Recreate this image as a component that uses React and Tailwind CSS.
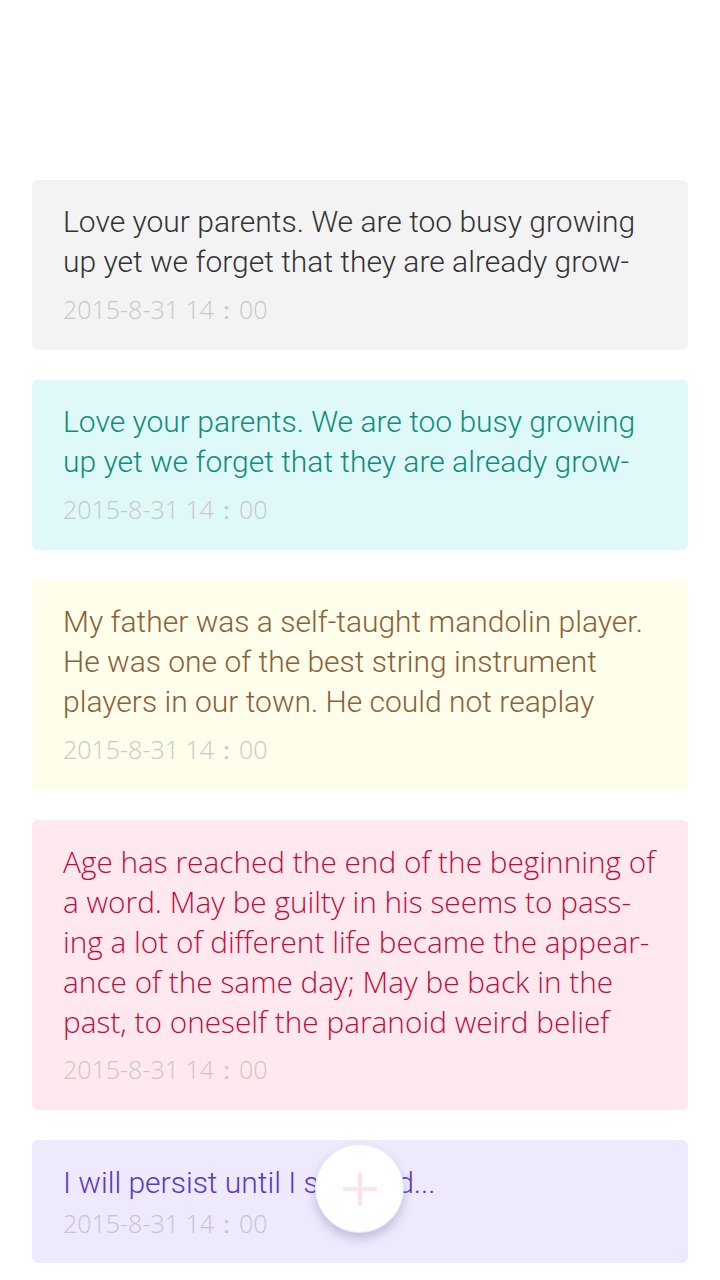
import React from "react";

const roboto = { fontFamily: "Roboto, 'Liberation Sans', sans-serif" };

const notes = [
  {
    bg: "bg-[#f3f3f3]",
    fg: "text-[#333333]",
    font: "font-['Roboto',sans-serif] font-light text-[30px]",
    lines: ["Love your parents. We are too busy growing", "up yet we forget that they are already grow-"],
  },
  {
    bg: "bg-[#dff8f8]",
    fg: "text-[#0f8c7d]",
    font: "font-['Roboto',sans-serif] font-light text-[30px]",
    lines: ["Love your parents. We are too busy growing", "up yet we forget that they are already grow-"],
  },
  {
    bg: "bg-[#fefeea]",
    fg: "text-[#8c6038]",
    font: "font-['Roboto',sans-serif] font-light text-[30px]",
    lines: [
      "My father was a self-taught mandolin player.",
      "He was one of the best string instrument",
      "players in our town. He could not reaplay",
    ],
  },
  {
    bg: "bg-[#ffe9ee]",
    fg: "text-[#c6093b]",
    font: "font-['Open_Sans',sans-serif] font-[360] text-[29.8px] tracking-[0px]",
    lines: [
      "Age has reached the end of the beginning of",
      "a word. May be guilty in his seems to pass-",
      "ing a lot of different life became the appear-",
      "ance of the same day; May be back in the",
      "past, to oneself the paranoid weird belief",
    ],
  },
];

function NoteCard({ note }) {
  return (
    <div className={`${note.bg} rounded-[6px] pl-[31px] pr-4 pt-[22px] pb-[21px]`}>
      <div className={`${note.fg} ${note.font} leading-[40px] whitespace-nowrap`}>
        {note.lines.map((l, i) => (
          <div key={i}>{l}</div>
        ))}
      </div>
      <div className="mt-[7px] text-[25px] leading-[40px] text-[#c8c8c8] font-['Open_Sans',sans-serif] font-light">
        2015-8-31 14：00
      </div>
    </div>
  );
}

export default function App() {
  return (
    <div className="relative w-[720px] h-[1280px] bg-white overflow-hidden">
      <div className="flex flex-col gap-[30px] px-8 pt-[180px]">
        {notes.map((n, i) => (
          <NoteCard key={i} note={n} />
        ))}
        <div className="bg-[#eee9fd] rounded-[6px] pl-[31px] pr-4 pt-[23px] pb-[20px]">
          <div className="text-[#5a38c9] text-[30px] leading-[40px] whitespace-nowrap font-light" style={roboto}>
            I will persist until I succeed...
          </div>
          <div className="text-[25px] leading-[40px] text-[#c8c3d4] font-['Open_Sans',sans-serif] font-light">
            2015-8-31 14：00
          </div>
        </div>
      </div>

      <button className="absolute left-[315px] top-[1144px] w-[89px] h-[89px] rounded-full bg-white border border-[#d6f3f3] shadow-[0_6px_10px_rgba(80,70,120,0.25)] flex items-center justify-center">
        <svg width="34" height="34" viewBox="0 0 34 34">
          <path d="M17 1v32M1 17h32" stroke="#fde2ea" strokeWidth="4" strokeLinecap="round" />
        </svg>
      </button>
    </div>
  );
}
